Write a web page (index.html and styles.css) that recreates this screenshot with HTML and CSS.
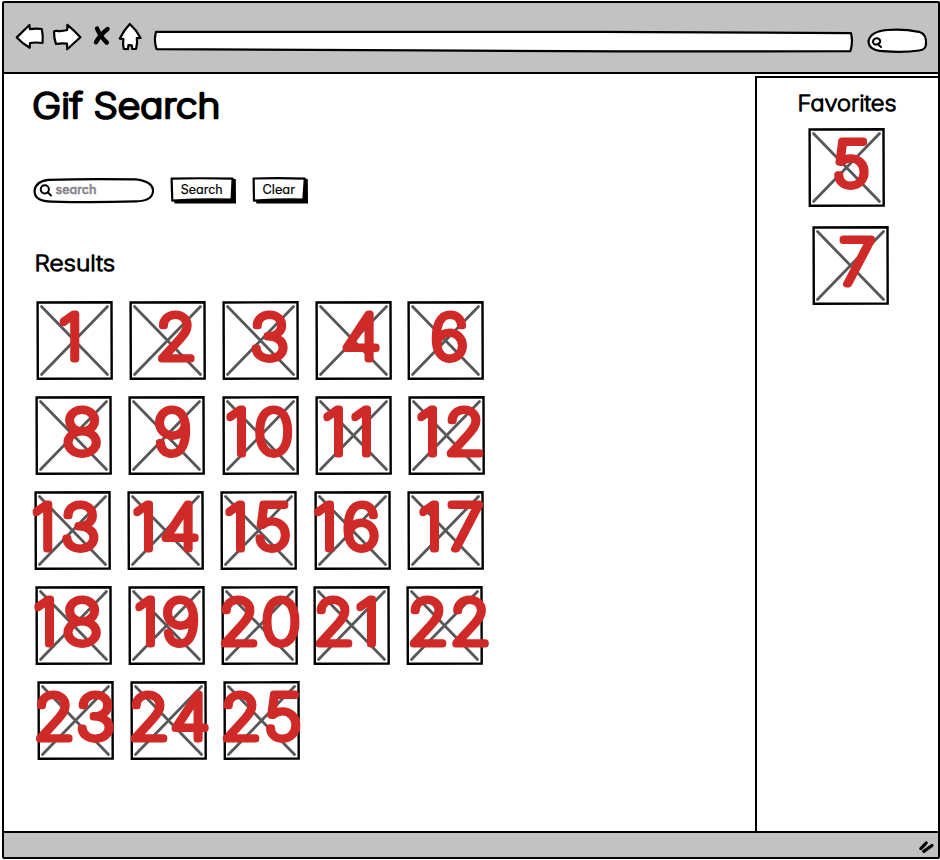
FILE: index.html
```
<!DOCTYPE html>
<html lang="en">
<head>
<meta charset="utf-8">
<title>Gif Search</title>
<link rel="stylesheet" href="styles.css">
</head>
<body>
<div class="window">
  <header class="toolbar">
    <svg class="sketch back" width="30" height="28" viewBox="15 23 30 28"><path d="M16.8 37.4 L29.4 25 L29.9 29.2 Q36 28.2 41.8 29 Q43.200 35 42.600 43 Q36 42 30 43 L29.700 47.800 Q22 43 16.800 37.400Z"/></svg>
    <svg class="sketch forward" width="30" height="28" viewBox="52 23 30 28"><path d="M54 31.600 Q54.500 30.800 57 30.900 Q62 31.500 67.200 30 L67.400 24.800 Q75 31 80.400 37.300 L67.200 49.200 L67 43.600 Q61 42.800 56 44 Q54 39 54 31.600Z"/></svg>
    <svg class="sketch stop" width="18" height="22" viewBox="93 25 18 22"><path class="cross" d="M97 28.500 Q100 36 106.800 42.600 M107.600 29 Q99.500 35.500 96 42.200"/></svg>
    <svg class="sketch home" width="26" height="30" viewBox="117 22 26 30"><path d="M129.800 24 Q136.500 30 140.600 38 L136.800 38.200 Q137.800 43 136 49 L132.200 48.800 L131.800 45.400 L128.400 45.200 L128 49.200 L123.800 49 Q122.500 44 123.400 39 L119.800 38.600 Q124 30 129.800 24Z"/></svg>
    <svg class="sketch address" width="702" height="26" viewBox="153 28 702 26"><path d="M156 31.800 Q420 31 600 31.800 T851 33.200 Q853.200 42 850.400 51.200 Q640 51.800 420 50.300 T156.600 49.200 Q153.600 41 156 31.800Z"/></svg>
    <svg class="sketch finder" width="62" height="28" viewBox="866 27 62 28"><path d="M868.500 41 Q870.500 31.500 887 30 Q903 28.600 919 31.800 Q927 34 926 44.500 Q925.500 50 919 50.500 Q904 52.800 883 51.200 Q868.500 50.500 868.500 41Z"/><path class="lens" d="M872.800 42 Q873.500 38 877.500 38.300 Q881 39.500 880 42.500 Q877 45.800 873.800 43.800Z M877.500 44 L881 47"/></svg>
  </header>
  <div class="page">
    <main class="content">
      <h1 class="title"><svg class="label" width="200" height="44"><text class="t-title" x=".3" y="31.300" textLength="188" lengthAdjust="spacingAndGlyphs">Gif Search</text></svg></h1>
      <form class="search-row">
        <svg class="sketch field" width="122" height="27" viewBox="33 177 122 27"><path d="M48 179.800 Q90 178.500 136 179.400 Q153.500 181.500 153 191.500 Q152 201 136 201.400 Q90 202.800 52 201.600 Q34 201.500 34.600 190.500 Q35.500 181.500 48 179.800Z"/><circle class="glass" cx="44.800" cy="189.300" r="4.100"/><path class="glass" d="M48 192.500 L51 195.500"/><text class="t-hint" x="55.500" y="193.800" textLength="41" lengthAdjust="spacingAndGlyphs">search</text></svg>
        <svg class="sketch button" width="68" height="29" viewBox="170 176 68 29"><path class="shadow" d="M174 180 L235.800 179 L236 203.600 L174.500 203.600Z"/><path d="M171.600 178.700 Q200 177.800 232.600 178.700 L231.600 199.500 Q200 198.700 172.300 200.700Z"/><text class="t-button" x="180.700" y="193.700" textLength="42" lengthAdjust="spacingAndGlyphs">Search</text></svg>
        <svg class="sketch button clear" width="58" height="29" viewBox="252 176 58 29"><path class="shadow" d="M256 180 L307.800 179 L308 203.600 L256.300 203.600Z"/><path d="M253.600 178.500 Q280 177.800 304.800 178.600 L303.400 199.500 Q280 199 254 200.700Z"/><text class="t-button" x="262.500" y="193.700" textLength="32.500" lengthAdjust="spacingAndGlyphs">Clear</text></svg>
      </form>
      <h2 class="results-title"><svg class="label" width="100" height="24"><text class="t-heading" x=".5" y="18.400" textLength="80.500" lengthAdjust="spacingAndGlyphs">Results</text></svg></h2>
      <div class="results" id="results"></div>
    </main>
    <aside class="favorites">
      <h2 class="favorites-title"><svg class="label" width="110" height="24"><text class="t-heading" x=".5" y="19" textLength="99" lengthAdjust="spacingAndGlyphs">Favorites</text></svg></h2>
      <div class="favorites-list" id="favorites"></div>
    </aside>
  </div>
  <footer class="statusbar">
    <svg class="sketch grip" width="18" height="16" viewBox="917 839 18 16"><path class="grip-line" d="M920.800 848.600 L926.200 843 M923.800 851.400 L932 845.500"/></svg>
  </footer>
</div>
<script src="tiles.js"></script>
</body>
</html>
```
FILE: tiles.js
```
// Each tile: number, horizontal ink offset of every digit, optional gap adjustment.
const rows = [
  { indent: 36, tiles: [["1", [22.3]], ["2", [28.3]], ["3", [28.7]], ["4", [27]], ["6", [24.3], -1]] },
  { indent: 35, tiles: [["8", [28]], ["9", [26.7]], ["10", [3, 32.7], 1], ["11", [7, 35]], ["12", [8, 38]]] },
  { indent: 34, tiles: [["13", [-2.7, 27.7]], ["14", [5, 34]], ["15", [4, 35.3]], ["16", [-1, 29], 1], ["17", [11, 39.7]]] },
  { indent: 35, tiles: [["18", [-2, 28]], ["19", [6, 34.7]], ["20", [-1, 41]], ["21", [2, 42], -1], ["22", [3, 45.7]]] },
  { indent: 37, tiles: [["23", [-1.7, 39.7]], ["24", [0, 41]], ["25", [-1, 43]]] }
];
const favorites = [["5", [26]], ["7", [26.7], 4]];

const STROKE = 7;
const STRETCH = 1.08;
const ctx = document.createElement("canvas").getContext("2d");
ctx.font = "100 61px Inter";

function tile([label, offsets, gap = 0]) {
  const xs = [...label].map((d, i) =>
    (offsets[i] / STRETCH + STROKE / 2 + ctx.measureText(d).actualBoundingBoxLeft + (d === "1" ? 1 : 0)).toFixed(1));
  return `<svg class="tile" width="77" height="79" viewBox="0 0 77 79" style="margin-left:${gap}px">
    <path class="tile-box" d="M1.600 1.500 L75.500 1.300 L75.700 77.500 L1.800 77.700Z"/>
    <path class="tile-cross" d="M5.500 5.500 L71.500 73.500 M71.500 5.500 L5.500 73.500"/>
    <text class="tile-number" transform="scale(${STRETCH} 1)" x="${xs.join(" ")}" y="57.500">${label}</text>
  </svg>`;
}

document.getElementById("results").innerHTML = rows.map(r =>
  `<div class="tile-row" style="padding-left:${r.indent}px">${r.tiles.map(tile).join("")}</div>`).join("");
document.getElementById("favorites").innerHTML = favorites.map(tile).join("");
```
FILE: styles.css
```
* { box-sizing: border-box; }
body { margin: 0; background: #fff; font-family: Inter, "Open Sans", sans-serif; overflow: hidden; }
svg { display: block; overflow: visible; flex: none; }
h1, h2, form { margin: 0; }

.window {
  width: 938px; height: 858px; margin: 1px 1px 1px 2px;
  border: 2px solid #000; border-radius: 2px;
  display: flex; flex-direction: column;
  background: #fff;
}
.toolbar {
  height: 71px; flex: none; background: #c2c2c2; border-bottom: 2px solid #000;
  display: flex; align-items: flex-start; padding-left: 11px;
}
.back { margin-top: 20px; }
.forward { margin: 20px 0 0 7px; }
.stop { margin: 22px 0 0 11px; }
.home { margin: 19px 0 0 6px; }
.address { margin: 25px 0 0 10px; }
.finder { margin: 24px 0 0 11px; }

.sketch path { fill: #fff; stroke: #000; stroke-width: 2.200; stroke-linejoin: round; stroke-linecap: round; }
.sketch .cross { fill: none; stroke-width: 4.400; }
.sketch .lens { fill: none; stroke-width: 2; }
.sketch .glass { fill: none; stroke: #000; stroke-width: 2; stroke-linecap: round; }
.sketch .shadow { fill: #000; stroke: none; }
.sketch .grip-line { fill: none; stroke-width: 3.200; }

.page { flex: 1; display: flex; min-height: 0; }
.content { flex: 1; padding-top: 13px; }
.title { margin-left: 28px; }
.search-row { display: flex; margin: 46px 0 0 29px; }
.search-row .button { margin: -1px 0 0 15px; }
.search-row .clear { margin-left: 14px; }
.results-title { margin: 48px 0 0 30px; }
.results { margin: 24px 0 0 -4px; display: flex; flex-direction: column; gap: 16px; }
.tile-row { display: flex; gap: 16px; }

.favorites { width: 183px; margin-top: 2px; border: solid #000; border-width: 2px 0 0 2px; }
.favorites-title { margin: 14px 0 0 40px; }
.favorites-list { margin: 12px 0 0 51px; display: flex; flex-direction: column; gap: 19px; }

.statusbar {
  height: 26px; flex: none; background: #c2c2c2; border-top: 2px solid #000;
  display: flex; justify-content: flex-end; align-items: flex-start; padding: 6px 3px 0 0;
}

.tile-box { fill: #fff; stroke: #000; stroke-width: 2.400; }
.tile-cross { fill: none; stroke: #58585a; stroke-width: 2.800; stroke-linecap: round; }
.tile-number {
  font: 100 61px Inter; fill: #cf2a27; stroke: #cf2a27; stroke-width: 7px;
  stroke-linejoin: round; stroke-linecap: round;
}

text { font-family: Inter, sans-serif; font-feature-settings: "cv11"; stroke-linejoin: round; stroke-linecap: round; }
.t-title { font-size: 34.500px; font-weight: 200; stroke: #000; stroke-width: 2.600px; }
.t-heading { font-size: 21.500px; font-weight: 200; stroke: #000; stroke-width: 1.300px; }
.t-button { font-size: 12.500px; font-weight: 400; stroke: #000; stroke-width: .2px; }
.t-hint { font-size: 12.500px; font-weight: 500; fill: #85858e; stroke: #85858e; stroke-width: .5px; }
```
